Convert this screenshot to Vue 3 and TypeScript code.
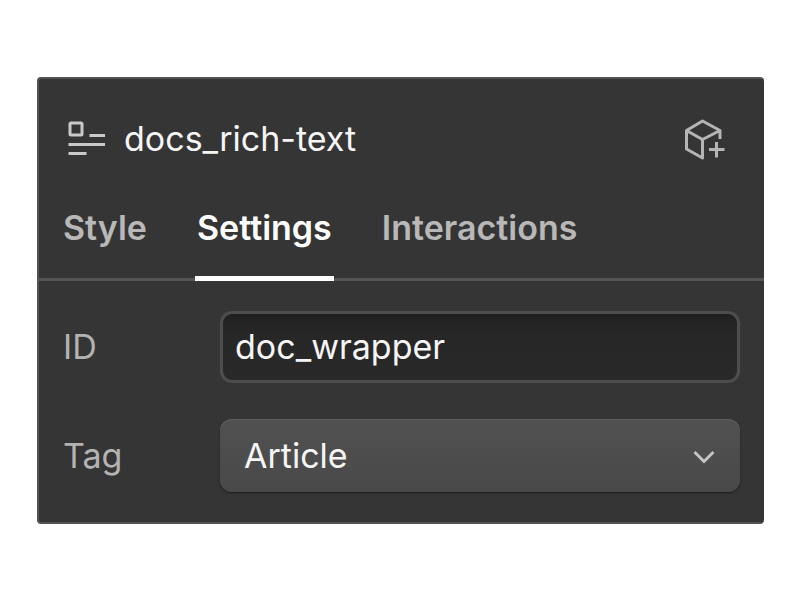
<script setup lang="ts">
import { ref } from 'vue'

interface Tab {
  id: string
  label: string
}

const tabs: Tab[] = [
  { id: 'style', label: 'Style' },
  { id: 'settings', label: 'Settings' },
  { id: 'interactions', label: 'Interactions' },
]

const activeTab = ref<string>('settings')
const elementId = ref<string>('doc_wrapper')
const tag = ref<string>('Article')
</script>

<template>
  <main class="page">
    <section class="panel">
      <header class="header">
        <svg class="rich-icon" width="38" height="36" viewBox="0 0 38 36" fill="none" stroke="currentColor" aria-hidden="true">
          <rect x="2" y="2" width="12" height="12" rx="1" stroke-width="3" />
          <path d="M21.5 14.5H37M0.5 23.5H37M0.5 32.5H18.5" stroke-width="3" />
        </svg>
        <h1 class="title">docs_rich-text</h1>
        <button class="add" type="button" aria-label="Create component">
          <svg width="42" height="42" viewBox="0 0 42 42" fill="none" stroke="currentColor" stroke-width="3" aria-hidden="true">
            <path d="M35 21V12.5L17.500 3L1.500 12.5V31L17.500 40V21.500L1.500 12.5M17.500 21.500L35 12.5" stroke-linejoin="round" />
            <path d="M31.500 24V39.500M24 31.500H39.500" />
          </svg>
        </button>
      </header>

      <nav class="tabs" role="tablist">
        <button
          v-for="t in tabs"
          :key="t.id"
          class="tab"
          :class="{ active: t.id === activeTab }"
          type="button"
          role="tab"
          :aria-selected="t.id === activeTab"
          @click="activeTab = t.id"
        >
          {{ t.label }}
        </button>
      </nav>

      <form class="fields" @submit.prevent>
        <label class="label" for="element-id">ID</label>
        <input id="element-id" v-model="elementId" class="control text" type="text" spellcheck="false" />

        <label class="label" for="element-tag">Tag</label>
        <div class="select-wrap">
          <select id="element-tag" v-model="tag" class="control select">
            <option>Article</option>
          </select>
          <svg class="chevron" width="22" height="18" viewBox="0 0 22 18" fill="none" stroke="currentColor" stroke-width="3" aria-hidden="true">
            <path d="M1.500 5L11 14.500L20.500 5" />
          </svg>
        </div>
      </form>
    </section>
  </main>
</template>

<style>
body {
  background: #fff;
}
</style>

<style scoped>
.page {
  padding: 77px 37px;
  font-family: Inter, 'Liberation Sans', sans-serif;
  font-size: 34px;
  line-height: 42px;
}

.panel {
  box-sizing: border-box;
  padding-bottom: 30px;
  border: 2px solid #525252;
  border-right-width: 0;
  border-radius: 4px;
  background: #353535;
  color: #fff;
}

.header {
  display: flex;
  align-items: center;
  padding: 39px 37px 39px 29px;
}

.rich-icon {
  flex: none;
  margin-right: 18px;
  color: #c9c9c9;
}

.title {
  flex: 1;
  margin: 0;
  color: #f5f5f5;
  font-size: inherit;
  font-weight: 400;
}

.add {
  display: flex;
  padding: 0;
  border: 0;
  background: none;
  color: #b5b5b5;
}

.tabs {
  display: flex;
  gap: 46px;
  padding-left: 22px;
  box-shadow: inset 0 -3px #555;
}

.tab {
  padding: 8px 2px 27px;
  border: 0;
  border-bottom: 5px solid transparent;
  background: none;
  color: #b8b8b8;
  font: inherit;
  font-weight: 600;
}

.tab.active {
  border-bottom-color: #fff;
  color: #fff;
}

.fields {
  display: grid;
  grid-template-columns: 157px minmax(0, 1fr);
  align-items: center;
  row-gap: 36px;
  padding: 30px 24px 0;
}

.label {
  color: #b3b3b3;
}

.control {
  display: block;
  box-sizing: border-box;
  width: 100%;
  height: 72px;
  margin: 0;
  border-radius: 12px;
  color: #f5f5f5;
  font: inherit;
  outline: none;
}

.text {
  padding: 0 12px 2px;
  border: 3px solid #4d4d4d;
  background: linear-gradient(#202020, #272727 30%, #292929);
}

.select-wrap {
  display: grid;
  align-items: center;
}

.select-wrap > * {
  grid-area: 1 / 1;
}

.select {
  height: 73px;
  padding: 1px 60px 0 24px;
  border: 0;
  background: linear-gradient(#515151, #494949);
  box-shadow: inset 0 1px #606060, 0 1px 2px #1c1c1c;
  appearance: none;
}

.chevron {
  justify-self: end;
  margin-right: 25px;
  color: #c4c4c4;
  pointer-events: none;
}
</style>
